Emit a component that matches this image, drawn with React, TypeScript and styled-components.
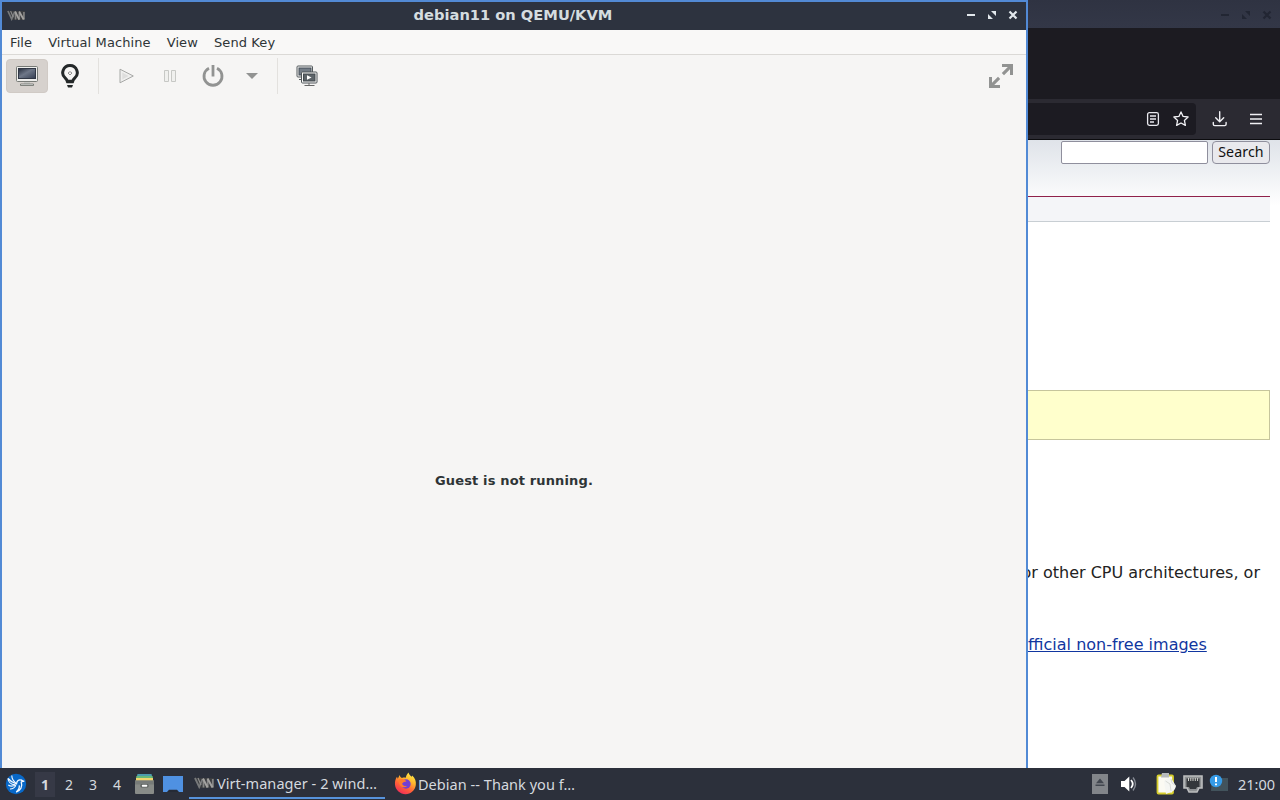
import React from "react";
import styled, { createGlobalStyle } from "styled-components";

const Global = createGlobalStyle`
  * { box-sizing: border-box; }
  body { margin: 0; background: #2c303b; overflow: hidden; }
  svg { display: block; flex: none; }
`;

const Screen = styled.div`
  position: relative;
  width: 1280px;
  height: 800px;
  overflow: hidden;
  display: flex;
  flex-direction: column;
  font-family: "DejaVu Sans", sans-serif;
`;

/* Browser window in the background */
const Browser = styled.div`
  height: 768px;
  display: flex;
  flex-direction: column;
  overflow: hidden;
  background: #fff;
`;
const BrowserTitle = styled.div`
  height: 28px;
  flex: none;
  background: linear-gradient(#2f3342, #333747);
  display: flex;
  justify-content: flex-end;
  align-items: center;
  padding: 2px 7px 0 0;
  gap: 9px;
`;
const TabStrip = styled.div`
  height: 71px;
  flex: none;
  background: #1c1b21;
`;
const NavBar = styled.div`
  height: 41px;
  flex: none;
  background: #2b2a32;
  border-bottom: 1px solid #0c0c0f;
  display: flex;
  align-items: center;
  padding-right: 16px;
`;
const UrlBar = styled.div`
  width: 1196px;
  height: 32px;
  border-radius: 4px;
  background: #1c1b22;
  display: flex;
  align-items: center;
  justify-content: flex-end;
  gap: 12px;
  padding-right: 7px;
  margin-right: 16px;
`;
const NavIcons = styled.div`
  display: flex;
  gap: 21px;
`;
const Page = styled.div`
  flex: 1;
  padding-right: 10px;
  background: linear-gradient(#dfe3e9, #fff 66px);
`;
const SearchRow = styled.div`
  height: 56px;
  display: flex;
  justify-content: flex-end;
  align-items: flex-start;
  padding-top: 1px;
  gap: 4px;
`;
const SearchInput = styled.input`
  width: 147px;
  height: 23px;
  border: 1px solid #8f8f9d;
  border-radius: 2px;
  background: #fff;
`;
const SearchButton = styled.button`
  width: 58px;
  height: 23px;
  padding: 0 0 1px;
  border: 1px solid #8f8f9d;
  border-radius: 4px;
  background: #e9e9ed;
  color: #111;
  font: 14.2px/20px "Noto Sans", sans-serif;
  letter-spacing: 0.1px;
`;
const PageNav = styled.div`
  height: 26px;
  border-top: 1px solid #90214a;
  border-bottom: 1px solid #c8ced3;
  background: #f4f5f8;
`;
const Notice = styled.div`
  height: 50px;
  margin-top: 168px;
  border: 1px solid #c6c59c;
  background: #ffffcc;
`;
const PageLine = styled.p<{ $top: number; $left: number }>`
  margin: ${(p) => p.$top}px 0 0;
  padding-left: ${(p) => p.$left}px;
  font-size: 16px;
  line-height: 24px;
  color: #222;
  white-space: nowrap;
`;
const PageLink = styled.a`
  color: #1136a0;
  text-decoration: underline;
`;

/* Virtual machine window */
const VmWindow = styled.div`
  position: absolute;
  left: 0;
  top: 0;
  width: 1028px;
  height: 768px;
  border: 2px solid #528ad5;
  border-bottom: 0;
  background: #f6f5f4;
  display: flex;
  flex-direction: column;
`;
const TitleBar = styled.div`
  height: 28px;
  flex: none;
  background: #2d333f;
  display: grid;
  grid-template-columns: 80px 1fr 80px;
  align-items: center;
  padding: 0 7px 2px 5px;
`;
const WindowTitle = styled.div`
  text-align: center;
  font-size: 14.65px;
  font-weight: bold;
  color: #d5dde0;
  line-height: 24px;
`;
const Controls = styled.div`
  display: flex;
  justify-content: flex-end;
  gap: 9px;
`;
const MenuBar = styled.div`
  height: 25px;
  flex: none;
  display: flex;
  gap: 16px;
  padding-left: 8px;
  font-size: 13px;
  letter-spacing: 0.1px;
  line-height: 26px;
  color: #2e3436;
  border-bottom: 1px solid #dbd9d6;
  background: #f9f8f7;
`;
const Toolbar = styled.div`
  height: 42px;
  flex: none;
  display: flex;
  align-items: center;
  padding: 0 12px 0 4px;
`;
const Tool = styled.div<{ $w: number; $active?: boolean }>`
  width: ${(p) => p.$w}px;
  height: 34px;
  display: flex;
  align-items: center;
  justify-content: center;
  border-radius: 4px;
  border: 1px solid ${(p) => (p.$active ? "#d0cac5" : "transparent")};
  background: ${(p) => (p.$active ? "#d6d1cd" : "transparent")};
`;
const Separator = styled.div<{ $l: number; $r: number }>`
  width: 1px;
  height: 36px;
  margin: 0 ${(p) => p.$r}px 0 ${(p) => p.$l}px;
  background: #e3e1de;
`;
const Spacer = styled.div`
  flex: 1;
`;
const Display = styled.div`
  flex: 1;
  display: flex;
  align-items: center;
  justify-content: center;
  padding-top: 96px;
`;
const Message = styled.div`
  font-size: 13px;
  letter-spacing: 0.14px;
  font-weight: bold;
  color: #2e3436;
`;

/* Taskbar */
const Taskbar = styled.div`
  height: 32px;
  display: flex;
  align-items: center;
  background: #2c303b;
  color: #d5d9df;
  font-family: "Noto Sans", sans-serif;
  padding: 0 4px 0 5px;
`;
const Workspaces = styled.div`
  display: flex;
  margin-left: 8px;
`;
const Workspace = styled.div<{ $active?: boolean }>`
  width: ${(p) => (p.$active ? 20 : 24)}px;
  height: 25px;
  margin-right: ${(p) => (p.$active ? 2 : 0)}px;
  line-height: 26px;
  text-align: center;
  font-size: 14px;
  font-weight: ${(p) => (p.$active ? 700 : 400)};
  background: ${(p) => (p.$active ? "#363946" : "transparent")};
`;
const Launchers = styled.div`
  display: flex;
  align-items: center;
  gap: 8px;
  margin: 0 6px 0 5px;
`;
const Task = styled.div<{ $active?: boolean }>`
  width: ${(p) => (p.$active ? 196 : 200)}px;
  height: 30px;
  display: flex;
  align-items: center;
  gap: ${(p) => (p.$active ? 3 : 1)}px;
  padding-left: 5px;
  margin-right: 4px;
  border-bottom: 2px solid ${(p) => (p.$active ? "#5793dc" : "transparent")};
`;
const TaskText = styled.span<{ $spacing: number; $drop?: number }>`
  font-size: 14.5px;
  line-height: 20px;
  padding-top: ${(p) => p.$drop ?? 0}px;
  letter-spacing: ${(p) => p.$spacing}px;
  white-space: nowrap;
`;
const Tray = styled.div`
  display: flex;
  align-items: center;
  margin-left: auto;
`;
const TrayItem = styled.div<{ $gap: number }>`
  margin-right: ${(p) => p.$gap}px;
`;
const Clock = styled.div`
  font-size: 14.5px;
  line-height: 20px;
  width: 38px;
  white-space: nowrap;
`;

const VmLogo = ({ w = 20, h = 12 }: { w?: number; h?: number }) => (
  <svg width={w} height={h} viewBox="0 0 20 12">
    <path d="M0 1h20v10H5Z" fill="#3a3c3f" />
    <path d="M1 1 5.200 10 8.500 2" stroke="#77797b" strokeWidth="1.800" fill="none" />
    <path d="M4 1l3 7" stroke="#8e8e8e" strokeWidth="1.200" fill="none" />
    <path d="M9.500 10.500V2M13.700 10.500V3M18.800 10.500V2" stroke="#858585" strokeWidth="1.800" />
    <path d="m9 1.500 4.500 9M13.500 1.500l5 9" stroke="#a3a2a0" strokeWidth="2" fill="none" />
  </svg>
);

const WindowControls = ({ color }: { color: string }) => (
  <>
    <svg width="12" height="12" viewBox="0 0 12 12"><path d="M2 5h8v2H2z" fill={color} /></svg>
    <svg width="12" height="12" viewBox="0 0 12 12">
      <path d="M5 2H10v5ZM2 5V10h5Z" fill={color} />
    </svg>
    <svg width="12" height="12" viewBox="0 0 12 12">
      <path d="M2.500 2.500l7 7M9.500 2.500l-7 7" stroke={color} strokeWidth="2.200" />
    </svg>
  </>
);

const MonitorIcon = () => (
  <svg width="24" height="22" viewBox="0 0 24 22">
    <defs>
      <linearGradient id="scr" x1="0" y1="0" x2="1" y2="1">
        <stop offset="0" stopColor="#252c3b" /><stop offset=".45" stopColor="#6e7788" /><stop offset="1" stopColor="#343d51" />
      </linearGradient>
    </defs>
    <rect x="1.500" y="1.500" width="21" height="15" rx="1" fill="#eeeeec" stroke="#777a76" />
    <rect x="3.500" y="3.500" width="17" height="10" fill="url(#scr)" stroke="#303745" />
    <path d="M9 17h6v2H9z" fill="#c4c5c2" />
    <path d="M5.500 19h13v1.500h-13z" fill="#eee" stroke="#666965" strokeWidth=".8" />
  </svg>
);
const BulbIcon = () => (
  <svg width="20" height="26" viewBox="0 0 20 26">
    <path d="M10 2.500a7.200 7.200 0 0 0-4.700 12.700c1.200 1.100 1.800 1.800 2 3.100h5.400c.2-1.300.8-2 2-3.100A7.200 7.200 0 0 0 10 2.500Z" fill="none" stroke="#242829" strokeWidth="3" />
    <path d="m8 10 2 2 2-2-2-1.400Z" fill="none" stroke="#777" strokeWidth=".8" />
    <path d="M6.500 17h7v3.200h-7zM7 22h6l-1 2.500H8z" fill="#242829" />
  </svg>
);
const PlayIcon = () => (
  <svg width="18" height="18" viewBox="0 0 18 18">
    <path d="M3 2.200 16.300 9 3 15.800Z" fill="#efefee" stroke="#a7a8a6" />
    <path d="M5.300 5.500 11.500 9l-6.200 3.500Z" fill="#dededd" />
  </svg>
);
const PauseIcon = () => (
  <svg width="14" height="14" viewBox="0 0 14 14">
    <path d="M1.500 1.500h4v11h-4zM8.500 1.500h4v11h-4z" fill="#f0f0ee" stroke="#c7c8c5" />
  </svg>
);
const PowerIcon = () => (
  <svg width="24" height="24" viewBox="0 0 24 24">
    <path d="M8 4.200a9 9 0 1 0 8 0" fill="none" stroke="#929392" strokeWidth="2.800" />
    <path d="M12 1v11.500" stroke="#929392" strokeWidth="2.800" />
  </svg>
);
const SnapshotIcon = () => (
  <svg width="22" height="22" viewBox="0 0 22 22">
    <rect x="1" y="1" width="15.500" height="11" rx="1" fill="#f2f2f0" stroke="#555b5e" />
    <rect x="3" y="3" width="12" height="7" fill="#737c86" stroke="#454d57" />
    <path d="M3 14.500h4" stroke="#555b5e" />
    <rect x="5.500" y="7" width="15.500" height="11" rx="1" fill="#fafaf9" stroke="#4f5558" />
    <rect x="7.500" y="9" width="11.500" height="7" fill="#5d6469" stroke="#42494e" />
    <path d="m11 10.300 4.600 2.200-4.600 2.200Z" fill="#fff" />
    <path d="M8.500 20.500h10M13 18v2" stroke="#666" />
  </svg>
);
const ExpandIcon = () => (
  <svg width="26" height="26" viewBox="0 0 26 26">
    <path d="M14 1h11v11h-3V6.200l-6 6L13.800 10l6-6H14ZM1 14h3v5.800l6-6 2.200 2.200-6 6H12v3H1Z" fill="#929392" />
  </svg>
);

const ReaderIcon = () => (
  <svg width="16" height="16" viewBox="0 0 16 16" fill="none" stroke="#e8e8ee" strokeWidth="1.300">
    <rect x="2.600" y="1.600" width="10.800" height="12.800" rx="1.800" /><path d="M5 5h6M5 8h6M5 11h4" />
  </svg>
);
const StarIcon = () => (
  <svg width="16" height="16" viewBox="0 0 16 16" fill="none" stroke="#f2f2f6" strokeWidth="1.300" strokeLinejoin="round">
    <path d="m8 .9 2.100 4.500 5 .6-3.700 3.400 1 5L8 12l-4.400 2.400 1-5L.9 6l5-.6Z" />
  </svg>
);
const DownloadIcon = () => (
  <svg width="16" height="16" viewBox="0 0 16 16" fill="none" stroke="#f0f0f4" strokeWidth="1.400" strokeLinecap="round" strokeLinejoin="round">
    <path d="M7.700.7v9.800M3.700 6.800l4 4 4-4M1.300 11.500v1.700c0 .9.5 1.400 1.400 1.400h10c.9 0 1.400-.5 1.400-1.400v-1.700" />
  </svg>
);
const HamburgerIcon = () => (
  <svg width="14" height="16" viewBox="0 0 14 16"><path d="M1 3.500h12M1 8h12M1 12.500h12" stroke="#f0f0f4" strokeWidth="1.400" /></svg>
);

const LubuntuIcon = () => (
  <svg width="22" height="22" viewBox="0 0 22 22">
    <circle cx="11" cy="11" r="10.200" fill="#0868c8" />
    <path d="M3 5.500c3 3.500 6 4.700 8.500 5.500.3-3 2.300-4.700 4.500-4 1 .2 1.500.8 3.300 1.400-1.500-.2-2.600 0-3.100.7 1.700 4.500-.7 8.700-5 9.900 2.300-1.800 3.500-4.200 3-6.600" fill="none" stroke="#f4f9ff" strokeWidth="1.300" />
    <path d="M6.800 2.600c-.1 3.400 1.600 5.600 4.700 8.200M3 5.500c.5 4 2.800 6 7 6.300M3.300 12c2.200 1.500 5 1.300 7.500-.2M5 16c2.500.1 4.500-1.200 6-3.800" fill="none" stroke="#f4f9ff" strokeWidth="1.100" />
  </svg>
);
const FilesIcon = () => (
  <svg width="21" height="22" viewBox="0 0 21 22">
    <path d="M3.500 1h14l1 4h-16z" fill="#4d9cad" /><path d="M2.500 3h16l.5 3H2z" fill="#69b878" />
    <path d="M2 5h17v4H2z" fill="#f2d36d" />
    <path d="M1 7.500h19V20q0 1-1 1H2q-1 0-1-1Z" fill="#888b88" /><path d="M1 7.500h19v4H1z" fill="#777b79" />
    <rect x="6.500" y="11" width="8" height="3.500" rx="1.200" fill="#5c605e" /><rect x="7.800" y="11.800" width="5.500" height="2" rx=".7" fill="#fff" />
  </svg>
);
const DesktopIcon = () => (
  <svg width="20" height="18" viewBox="0 0 20 18">
    <path d="M0 1h20v16H0z" fill="#4f91e2" /><path d="M4 17l2-2.200h8L16 17Z" fill="#252a35" />
  </svg>
);
const FirefoxIcon = () => (
  <svg width="23" height="23" viewBox="0 0 23 23">
    <defs>
      <linearGradient id="fx" x1=".8" y1="0" x2=".25" y2="1">
        <stop offset="0" stopColor="#fff14a" /><stop offset=".35" stopColor="#ffb52c" /><stop offset=".65" stopColor="#ff6238" /><stop offset="1" stopColor="#ef285b" />
      </linearGradient>
    </defs>
    <path d="M14.500.500c.300 2 2 3.200 3.300 4.300l.400-1.300C21 6 22.300 9 21.800 13c-.7 5.300-5 9.200-10.300 9.200S1.500 18 1 12.800C.7 9.300 1.600 6.500 3 4.700l.8 2 1.900-3.800c.3 1.500 1 2.500 2.300 3.100 1.400-.6 2.600-.6 3.800-.2.300-2 1.200-3.900 2.700-5.300Z" fill="url(#fx)" />
    <circle cx="12" cy="12" r="4.700" fill="#743fd1" />
    <path d="M4.500 7.200c3-.8 6-.3 8 2.200-2.200 0-3.200.7-4.400 2.300.6 1.800 2.500 2.500 5 2.200-3.500 3.200-8.500 1-8.600-6.700Z" fill="#ff7c2c" />
  </svg>
);
const EjectIcon = () => (
  <svg width="16" height="20" viewBox="0 0 16 20">
    <path d="M0 0h16v20H0z" fill="#82858a" /><path d="m8 4.500 4 4.700H4ZM3.500 10.500h9V12h-9z" fill="#41464f" />
  </svg>
);
const VolumeIcon = () => (
  <svg width="18" height="18" viewBox="0 0 18 18">
    <path d="M1 6h3.500l4.800-4.500v15L4.500 12H1Z" fill="#fff" />
    <path d="M11 5q3.500 4 0 8" fill="none" stroke="#fff" strokeWidth="1.800" />
    <path d="M13 2.500q5 6.500 0 13" fill="none" stroke="#858992" strokeWidth="1.400" />
  </svg>
);
const ClipboardIcon = () => (
  <svg width="21" height="22" viewBox="0 0 21 22">
    <rect x="1.500" y="2.500" width="15.500" height="18" rx="1" fill="#fbfaf3" stroke="#d6cd2c" strokeWidth="1.800" />
    <path d="M6 0h7v4.500H5z" fill="#b7babc" />
    <path d="M8 8q4-3.500 7-3l5 8q-1 5-5 6l-5 2Z" fill="#f5f6f3" /><path d="m9.500 8 4.500 3 1 7M15 6l1 4 4 3" fill="none" stroke="#cccfc9" strokeWidth=".7" />
  </svg>
);
const NetworkIcon = () => (
  <svg width="20" height="20" viewBox="0 0 20 20">
    <path d="M1 2h18v12h-3l-2 4H6l-2-4H1Z" fill="#8e9193" stroke="#bcbdbf" strokeWidth="1.600" />
    <path d="M3.500 4.500h13V13H14l-1 2H7l-1-2H3.500Z" fill="#34373b" />
    <path d="M5.500 4v3M7.800 4v3M10 4v3M12.300 4v3M14.600 4v3" stroke="#d2d2ce" strokeWidth="1" />
  </svg>
);
const UpdateIcon = () => (
  <svg width="20" height="20" viewBox="0 0 20 20">
    <path d="M3 4h16v13H2z" fill="#42535c" /><circle cx="7" cy="7" r="6.200" fill="#369be7" />
    <path d="M7 3v5M7 9.600v1.700" stroke="#fff" strokeWidth="2" />
  </svg>
);

export default function App() {
  return (
    <Screen>
      <Global />
      <Browser>
        <BrowserTitle><WindowControls color="#222633" /></BrowserTitle>
        <TabStrip />
        <NavBar>
          <UrlBar><ReaderIcon /><StarIcon /></UrlBar>
          <NavIcons><DownloadIcon /><HamburgerIcon /></NavIcons>
        </NavBar>
        <Page>
          <SearchRow><SearchInput /><SearchButton>Search</SearchButton></SearchRow>
          <PageNav />
          <Notice />
          <PageLine $top={121} $left={1021.5}>or other CPU architectures, or</PageLine>
          <PageLine $top={48} $left={1018.3}><PageLink>official non-free images</PageLink></PageLine>
        </Page>
      </Browser>

      <VmWindow>
        <TitleBar>
          <VmLogo w={18} h={11} />
          <WindowTitle>debian11 on QEMU/KVM</WindowTitle>
          <Controls><WindowControls color="#e2e8ec" /></Controls>
        </TitleBar>
        <MenuBar>
          <span>File</span><span>Virtual Machine</span><span>View</span><span>Send Key</span>
        </MenuBar>
        <Toolbar>
          <Tool $w={42} $active><MonitorIcon /></Tool>
          <Tool $w={44}><BulbIcon /></Tool>
          <Separator $l={6} $r={5} />
          <Tool $w={44}><PlayIcon /></Tool>
          <Tool $w={43}><PauseIcon /></Tool>
          <Tool $w={43}><PowerIcon /></Tool>
          <Tool $w={36}>
            <svg width="12" height="6" viewBox="0 0 12 6"><path d="M0 0h12L6 6Z" fill="#929392" /></svg>
          </Tool>
          <Separator $l={7} $r={8} />
          <Tool $w={42}><SnapshotIcon /></Tool>
          <Spacer />
          <ExpandIcon />
        </Toolbar>
        <Display><Message>Guest is not running.</Message></Display>
      </VmWindow>

      <Taskbar>
        <LubuntuIcon />
        <Workspaces>
          <Workspace $active>1</Workspace>
          <Workspace>2</Workspace>
          <Workspace>3</Workspace>
          <Workspace>4</Workspace>
        </Workspaces>
        <Launchers><FilesIcon /><DesktopIcon /></Launchers>
        <Task $active><VmLogo w={20} h={12} /><TaskText $spacing={0.05}>Virt-manager - 2 wind…</TaskText></Task>
        <Task><FirefoxIcon /><TaskText $spacing={0.04} $drop={2}>Debian -- Thank you f…</TaskText></Task>
        <Tray>
          <TrayItem $gap={12}><EjectIcon /></TrayItem>
          <TrayItem $gap={18}><VolumeIcon /></TrayItem>
          <TrayItem $gap={6}><ClipboardIcon /></TrayItem>
          <TrayItem $gap={6}><NetworkIcon /></TrayItem>
          <TrayItem $gap={9}><UpdateIcon /></TrayItem>
          <Clock>21:00</Clock>
        </Tray>
      </Taskbar>
    </Screen>
  );
}
